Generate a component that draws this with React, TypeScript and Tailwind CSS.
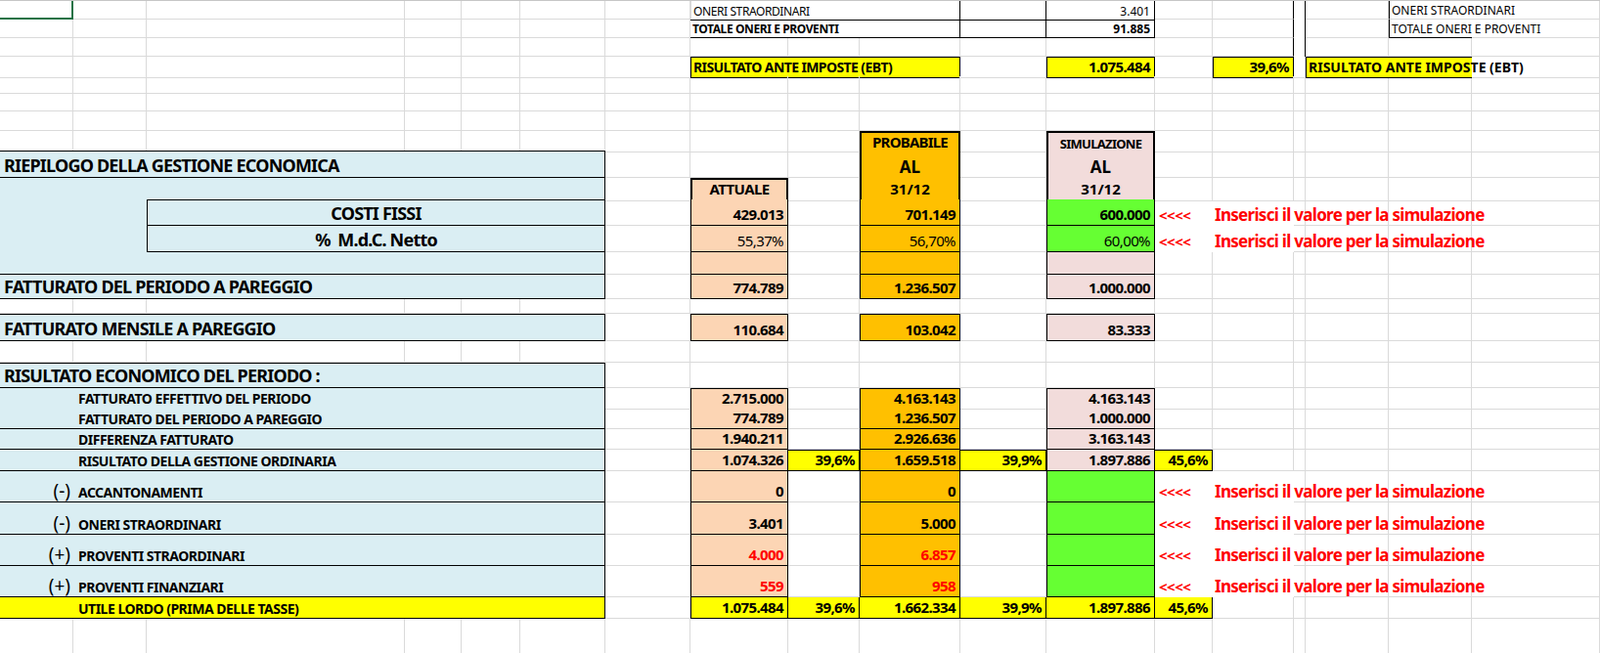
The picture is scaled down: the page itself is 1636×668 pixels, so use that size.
import React from "react";

type C = { s: number; n?: number; c?: string; t?: React.ReactNode };

const SPAN: Record<number, string> = {
  1: "col-span-1", 2: "col-span-2", 3: "col-span-3", 4: "col-span-4",
  5: "col-span-5", 6: "col-span-6",
};
const COLS = "grid grid-cols-[75px_75px_264px_58px_60px_87px_87px_100px_73px_103px_88px_111px_59px_83px_12px_85px_85px_131px]";

const G = "border-r border-b border-[#dadada]";
const num = "justify-end pr-1 font-bold text-[15px] tracking-[-0.6px]";
const PE = "bg-[#fcd5b4] border-r border-b border-l border-black";
const OR = "bg-[#ffc000] border-r border-b border-l border-black";
const PI = "bg-[#f2dcdb] border-r border-b border-l border-black";
const GR = "bg-[#66ff33] border-r border-b border-l border-black";
const YE = "bg-[#ffff00] border-r border-b border-black";
const BL = "bg-[#daeef3] border-b border-r border-black";
const RED = "text-[#ff0000]";
const BIG = "font-bold text-[18px] tracking-[-0.8px]";
const MID = "font-bold text-[14px] tracking-[-0.5px]";

const arrow = (): C[] => [
  { s: 12, c: `${RED} font-bold text-[15px] pl-1 tracking-[-0.5px]`, t: "<<<<" },
  { s: 13, c: `${RED} font-bold text-[17px] pl-0.5 tracking-[-0.7px] relative z-10`, t: "Inserisci il valore per la simulazione" },
];

const sub = (t: string): C => ({ s: 0, n: 6, c: `${BL} pl-[80px] ${MID}`, t });
const sign = (sg: string, t: string): C => ({
  s: 0, n: 6, c: `${BL} ${MID}`,
  t: (<><span className="w-[80px] text-right pr-2 font-normal text-[19px] leading-none tracking-normal">{sg}</span>{t}</>),
});

const rows: { h: string; cells: C[] }[] = [
  { h: "h-[19px]", cells: [
    { s: 0, c: "border-r-2 border-b-2 border-[#217346]" },
    { s: 7, n: 3, c: "border-l border-r border-[#dadada] border-r-black text-[12px] pl-0.5 tracking-[-0.4px]", t: "ONERI STRAORDINARI" },
    { s: 10, c: "border-r border-black" },
    { s: 11, c: "border-r border-black justify-end pr-1 text-[12px]", t: "3.401" },
    { s: 13, c: "border-r border-b border-[#dadada] border-r-black" },
    { s: 14, c: "border-r border-black" },
    { s: 16, c: "border-l border-black text-[12px] pl-0.5 relative z-10 border-b border-b-[#dadada]", t: "ONERI STRAORDINARI" },
  ]},
  { h: "h-[19px]", cells: [
    { s: 7, n: 3, c: "border-t border-b border-r border-black text-[12px] font-bold pl-0.5 tracking-[-0.4px]", t: "TOTALE ONERI E  PROVENTI" },
    { s: 10, c: "border-t border-b border-r border-black" },
    { s: 11, c: "border-t border-b border-r border-black justify-end pr-1 text-[12px] font-bold", t: "91.885" },
    { s: 13, c: "border-r border-b border-[#dadada] border-r-black" },
    { s: 14, c: "border-r border-black" },
    { s: 16, c: "border-l border-b border-black text-[12px] pl-0.5 relative z-10", t: "TOTALE ONERI E  PROVENTI" },
  ]},
  { h: "h-[19px]", cells: [
    { s: 13, c: "border-r border-b border-[#dadada] border-r-black" },
    { s: 14, c: "border-r border-black" },
  ]},
  { h: "h-[20px]", cells: [
    { s: 7, n: 3, c: `${YE} border-t border-l text-[14px] font-bold pl-0.5 tracking-[-0.6px]`, t: "RISULTATO ANTE IMPOSTE (EBT)" },
    { s: 11, c: `${YE} border-t border-l ${num} text-[14px]`, t: "1.075.484" },
    { s: 13, c: `${YE} border-t border-l ${num} text-[14px]`, t: "39,6%" },
    { s: 15, n: 2, c: `bg-[#ffff00] border-t border-b border-l border-black text-[14px] font-bold pl-0.5 relative z-10`, t: "RISULTATO ANTE IMPOSTE (EBT)" },
  ]},
  { h: "h-[18px]", cells: [] },
  { h: "h-[18px]", cells: [] },
  { h: "h-[20px]", cells: [] },
  { h: "h-[20px]", cells: [
    { s: 9, c: "bg-[#ffc000] border-t-2 border-l-2 border-r-2 border-black justify-center font-bold text-[15px] tracking-[-0.8px]", t: "PROBABILE" },
    { s: 11, c: "bg-[#f2dcdb] border-t-2 border-l-2 border-r-2 border-black justify-center font-bold text-[13px] tracking-[-0.7px]", t: "SIMULAZIONE" },
  ]},
  { h: "h-[28px]", cells: [
    { s: 0, n: 6, c: `${BL} border-t pl-1 ${BIG}`, t: "RIEPILOGO DELLA GESTIONE ECONOMICA" },
    { s: 9, c: "bg-[#ffc000] border-l-2 border-r-2 border-black justify-center font-bold text-[17px]", t: "AL" },
    { s: 11, c: "bg-[#f2dcdb] border-l-2 border-r-2 border-black justify-center font-bold text-[17px]", t: "AL" },
  ]},
  { h: "h-[22px]", cells: [
    { s: 0, n: 6, c: "bg-[#daeef3] border-r border-black" },
    { s: 7, c: `bg-[#fcd5b4] border-2 border-black justify-center font-bold text-[15px] tracking-[-0.6px]`, t: "ATTUALE" },
    { s: 9, c: "bg-[#ffc000] border-l-2 border-r-2 border-b-2 border-black justify-center font-bold text-[15px]", t: "31/12" },
    { s: 11, c: "bg-[#f2dcdb] border-l-2 border-r-2 border-b-2 border-black justify-center font-bold text-[15px]", t: "31/12" },
  ]},
  { h: "h-[27px]", cells: [
    { s: 0, n: 2, c: "bg-[#daeef3]" },
    { s: 2, n: 4, c: `${BL} border-l border-t justify-center ${BIG}`, t: "COSTI FISSI" },
    { s: 7, c: `${PE} ${num}`, t: "429.013" },
    { s: 9, c: `${OR} ${num}`, t: "701.149" },
    { s: 11, c: `${GR} ${num}`, t: "600.000" },
    ...arrow(),
  ]},
  { h: "h-[27px]", cells: [
    { s: 0, n: 2, c: "bg-[#daeef3]" },
    { s: 2, n: 4, c: `${BL} border-l justify-center ${BIG} whitespace-pre`, t: "%  M.d.C. Netto" },
    { s: 7, c: `${PE} justify-end pr-1 text-[15px] tracking-[-0.6px]`, t: "55,37%" },
    { s: 9, c: `${OR} justify-end pr-1 text-[15px] tracking-[-0.6px]`, t: "56,70%" },
    { s: 11, c: `${GR} justify-end pr-1 text-[15px] tracking-[-0.6px]`, t: "60,00%" },
    ...arrow(),
  ]},
  { h: "h-[23px]", cells: [
    { s: 0, n: 6, c: BL },
    { s: 7, c: PE }, { s: 9, c: OR }, { s: 11, c: PI },
  ]},
  { h: "h-[25px]", cells: [
    { s: 0, n: 6, c: `${BL} pl-1 ${BIG}`, t: "FATTURATO DEL PERIODO A PAREGGIO" },
    { s: 7, c: `${PE} ${num}`, t: "774.789" },
    { s: 9, c: `${OR} ${num}`, t: "1.236.507" },
    { s: 11, c: `${PI} ${num}`, t: "1.000.000" },
  ]},
  { h: "h-[15px]", cells: [] },
  { h: "h-[28px]", cells: [
    { s: 0, n: 6, c: `${BL} border-t pl-1 ${BIG}`, t: "FATTURATO MENSILE A PAREGGIO" },
    { s: 7, c: `${PE} border-t ${num}`, t: "110.684" },
    { s: 9, c: `${OR} border-t ${num}`, t: "103.042" },
    { s: 11, c: `${PI} border-t ${num}`, t: "83.333" },
  ]},
  { h: "h-[22px]", cells: [] },
  { h: "h-[26px]", cells: [
    { s: 0, n: 6, c: `${BL} border-t pl-1 ${BIG}`, t: "RISULTATO ECONOMICO DEL PERIODO :" },
  ]},
  { h: "h-[21px]", cells: [
    sub("FATTURATO EFFETTIVO DEL PERIODO"),
    { s: 7, c: `${PE} border-t ${num}`, t: "2.715.000" },
    { s: 9, c: `${OR} border-t ${num}`, t: "4.163.143" },
    { s: 11, c: `${PI} border-t ${num}`, t: "4.163.143" },
  ]},
  { h: "h-[21px]", cells: [
    sub("FATTURATO DEL PERIODO A PAREGGIO"),
    { s: 7, c: `${PE} ${num}`, t: "774.789" },
    { s: 9, c: `${OR} ${num}`, t: "1.236.507" },
    { s: 11, c: `${PI} ${num}`, t: "1.000.000" },
  ]},
  { h: "h-[21px]", cells: [
    sub("DIFFERENZA FATTURATO"),
    { s: 7, c: `${PE} ${num}`, t: "1.940.211" },
    { s: 9, c: `${OR} ${num}`, t: "2.926.636" },
    { s: 11, c: `${PI} ${num}`, t: "3.163.143" },
  ]},
  { h: "h-[22px]", cells: [
    sub("RISULTATO DELLA GESTIONE ORDINARIA"),
    { s: 7, c: `${PE} ${num}`, t: "1.074.326" },
    { s: 8, c: `${YE} border-t ${num}`, t: "39,6%" },
    { s: 9, c: `${OR} ${num}`, t: "1.659.518" },
    { s: 10, c: `${YE} border-t ${num}`, t: "39,9%" },
    { s: 11, c: `${PI} ${num}`, t: "1.897.886" },
    { s: 12, c: `${YE} border-t ${num}`, t: "45,6%" },
  ]},
  ...[
    ["(-)", "ACCANTONAMENTI", "0", "0", "h-[32px]", ""],
    ["(-)", "ONERI STRAORDINARI", "3.401", "5.000", "h-[33px]", ""],
    ["(+)", "PROVENTI STRAORDINARI", "4.000", "6.857", "h-[32px]", RED],
    ["(+)", "PROVENTI FINANZIARI", "559", "958", "h-[32px]", RED],
  ].map(([sg, l, a, p, h, col]) => ({
    h,
    cells: [
      sign(sg, l),
      { s: 7, c: `${PE} ${num} ${col}`, t: a },
      { s: 9, c: `${OR} ${num} ${col}`, t: p },
      { s: 11, c: GR },
      ...arrow(),
    ] as C[],
  })),
  { h: "h-[22px]", cells: [
    { s: 0, n: 6, c: `${YE} pl-[80px] ${MID}`, t: "UTILE LORDO (PRIMA DELLE TASSE)" },
    { s: 7, c: `${YE} border-l ${num}`, t: "1.075.484" },
    { s: 8, c: `${YE} ${num}`, t: "39,6%" },
    { s: 9, c: `${YE} ${num}`, t: "1.662.334" },
    { s: 10, c: `${YE} ${num}`, t: "39,9%" },
    { s: 11, c: `${YE} ${num}`, t: "1.897.886" },
    { s: 12, c: `${YE} ${num}`, t: "45,6%" },
  ]},
  { h: "h-[36px]", cells: [] },
];

function Row({ h, cells }: { h: string; cells: C[] }) {
  const out: React.ReactNode[] = [];
  let col = 0;
  const sorted = [...cells].sort((a, b) => a.s - b.s);
  for (const cell of sorted) {
    while (col < cell.s) out.push(<div key={"g" + col} className={G} />), col++;
    const n = cell.n ?? 1;
    out.push(
      <div key={"c" + col} className={`${SPAN[n]} flex items-end pb-px whitespace-nowrap leading-tight ${cell.c ?? G}`}>
        {cell.t}
      </div>
    );
    col += n;
  }
  while (col < 18) out.push(<div key={"g" + col} className={G} />), col++;
  return <div className={`${COLS} ${h}`}>{out}</div>;
}

export default function App() {
  return (
    <div className="w-[1636px] h-[668px] overflow-hidden bg-white text-black font-['Liberation_Sans',Arial,sans-serif] border-t border-[#c6c6c6]">
      {rows.map((r, i) => (
        <Row key={i} h={r.h} cells={r.cells} />
      ))}
    </div>
  );
}
